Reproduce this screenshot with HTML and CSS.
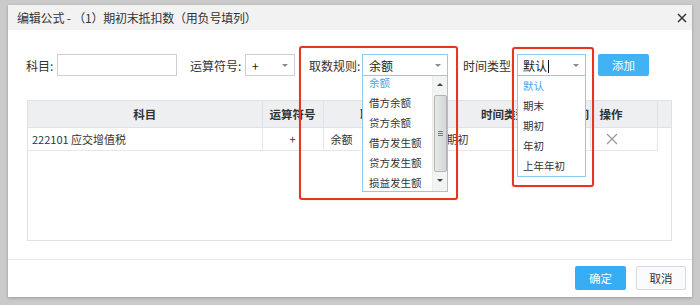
FILE: index.html
```html
<!DOCTYPE html>
<html>
<head>
<meta charset="utf-8">
<link rel="stylesheet" href="styles.css">
</head>
<body>
<div class="dialog">
  <div class="dlg-head">
    <span class="dlg-title">编辑公式 - （1）期初末抵扣数（用负号填列）</span>
    <svg class="dlg-close" width="10" height="10" viewBox="0 0 10 10"><path d="M1 1L9 9M9 1L1 9" stroke="#333" stroke-width="1.5" fill="none"/></svg>
  </div>

  <div class="form-row">
    <div class="field">
      <span class="lbl l-subject">科目:</span>
      <div class="input"></div>
    </div>
    <div class="field f-op">
      <span class="lbl l-op">运算符号:</span>
      <div class="select s-op"><span>+</span><i class="caret"></i></div>
    </div>
    <div class="field f-rule">
      <span class="lbl l-rule">取数规则:</span>
      <div class="select-wrap">
        <div class="select s-rule focus"><span>余额</span><i class="caret"></i></div>
        <div class="dropdown dd-rule">
          <div class="dd-list dd-list-scrolled">
            <div class="dd-item sel">余额</div>
            <div class="dd-item">借方余额</div>
            <div class="dd-item">贷方余额</div>
            <div class="dd-item">借方发生额</div>
            <div class="dd-item">贷方发生额</div>
            <div class="dd-item">损益发生额</div>
          </div>
          <div class="sbar">
            <div class="sbar-arrow"><i class="tri-up"></i></div>
            <div class="sbar-thumb"><i class="grip"></i></div>
            <div class="sbar-arrow"><i class="tri-down"></i></div>
          </div>
        </div>
      </div>
      <span class="mark mark-rule"></span>
    </div>
    <div class="field f-time">
      <span class="lbl l-time">时间类型:</span>
      <div class="select-wrap">
        <div class="select s-time focus"><span>默认<i class="cursor"></i></span><i class="caret"></i></div>
        <div class="dropdown dd-time">
          <div class="dd-list">
            <div class="dd-item sel">默认</div>
            <div class="dd-item">期末</div>
            <div class="dd-item">期初</div>
            <div class="dd-item">年初</div>
            <div class="dd-item">上年年初</div>
          </div>
        </div>
      </div>
      <span class="mark mark-time"></span>
    </div>
    <div class="btn btn-add">添加</div>
  </div>

  <div class="grid">
    <table class="tbl">
      <colgroup>
        <col class="c1"><col class="c2"><col class="c3"><col class="c4"><col class="c5"><col class="c6"><col class="c7">
      </colgroup>
      <thead>
        <tr>
          <th>科目</th>
          <th>运算符号</th>
          <th>取数规则</th>
          <th class="th-time">时间类型</th>
          <th>期间</th>
          <th class="th-left">操作</th>
          <th class="th-fill"></th>
        </tr>
      </thead>
      <tbody>
        <tr>
          <td class="td-subject">222101 应交增值税</td>
          <td class="td-center">+</td>
          <td>余额</td>
          <td class="td-time">期初</td>
          <td></td>
          <td class="td-op"><svg width="12" height="12" viewBox="0 0 12 12"><path d="M1 1L11 11M11 1L1 11" stroke="#9a9a9a" stroke-width="1.3" fill="none"/></svg></td>
          <td class="td-fill"></td>
        </tr>
      </tbody>
    </table>
  </div>

  <div class="dlg-foot">
    <div class="btn btn-ok">确定</div>
    <div class="btn btn-cancel">取消</div>
  </div>
</div>
</body>
</html>
```

FILE: styles.css
```css
* { box-sizing: border-box; }

body {
  margin: 0;
  width: 700px;
  height: 305px;
  overflow: hidden;
  background: #cacaca;
  font-family: "Noto Sans CJK SC", "Liberation Sans", sans-serif;
  color: #333;
}

.dialog {
  margin: 5px 0 0 8px;
  width: 684px;
  height: 292px;
  background: #fff;
  display: flex;
  flex-direction: column;
  box-shadow: 0 1px 3px rgba(0,0,0,0.25);
}

.dlg-head {
  height: 25px;
  flex: none;
  background: #f2f2f2;
  display: flex;
  align-items: center;
  justify-content: space-between;
  padding: 0 5px 0 9px;
}

.dlg-title {
  font-size: 12px;
  color: #333;
  letter-spacing: -0.2px;
}

.dlg-close { display: block; }

/* form row */
.form-row {
  margin-top: 24px;
  height: 22px;
  flex: none;
  display: flex;
  align-items: stretch;
  padding-left: 18px;
  font-size: 12px;
}

.field {
  display: flex;
  align-items: stretch;
  position: relative;
}

.lbl {
  display: flex;
  align-items: center;
  white-space: nowrap;
  color: #333;
}

.l-subject { width: 31px; }
.l-op { width: 55px; }
.l-rule { width: 53px; }
.l-time { width: 54px; }

.f-op { margin-left: 13px; }
.f-rule { margin-left: 14px; }
.f-time { margin-left: 15px; }

.input {
  width: 120px;
  border: 1px solid #cfcfcf;
  background: #fff;
}

.select-wrap {
  position: relative;
  display: flex;
}

.select {
  border: 1px solid #cfcfcf;
  background: #fff;
  display: flex;
  align-items: center;
  justify-content: space-between;
  padding: 0 6px 0 6px;
  font-size: 12px;
  color: #222;
}

.select.focus { border-color: #8ccdef; }

.s-op { width: 50px; }
.s-rule { width: 86px; }
.s-time { width: 69px; padding-left: 5px; }

.caret {
  width: 0;
  height: 0;
  border-left: 3px solid transparent;
  border-right: 3px solid transparent;
  border-top: 3px solid #8a8a8a;
}

.cursor {
  display: inline-block;
  width: 1px;
  height: 13px;
  background: #111;
  vertical-align: -2px;
  margin-left: 1px;
}

/* dropdowns */
.dropdown {
  position: absolute;
  left: 0;
  top: 22px;
  border: 1px solid #8ccdef;
  border-top: none;
  background: #fff;
  display: flex;
  z-index: 5;
  overflow: hidden;
}

.dd-rule { width: 86px; height: 116px; }
.dd-time { width: 69px; height: 101px; }

.dd-list {
  flex: 1;
  overflow: hidden;
}

.dd-list-scrolled .dd-item:first-child { margin-top: -3px; }

.dd-item {
  height: 20px;
  line-height: 20px;
  padding-left: 6px;
  font-size: 10.5px;
  color: #333;
  white-space: nowrap;
}

.dd-time .dd-item { padding-left: 5px; }

.dd-item.sel { color: #4aa5e8; }

.sbar {
  width: 15px;
  flex: none;
  background: #f3f3f3;
  display: flex;
  flex-direction: column;
  align-items: center;
  border-left: 1px solid #ececec;
}

.sbar-arrow {
  height: 17px;
  width: 100%;
  display: flex;
  align-items: center;
  justify-content: center;
}

.tri-up, .tri-down {
  width: 0;
  height: 0;
  border-left: 3px solid transparent;
  border-right: 3px solid transparent;
}
.tri-up { border-bottom: 3px solid #444; }
.tri-down { border-top: 3px solid #444; }

.sbar-thumb {
  margin-top: 2px;
  width: 13px;
  height: 77px;
  border: 1px solid #b5b5b5;
  border-radius: 2px;
  background: linear-gradient(to right, #e8e8e8, #d6d6d6);
  display: flex;
  align-items: center;
  justify-content: center;
}

.grip {
  width: 5px;
  height: 5px;
  border-top: 1px solid #777;
  border-bottom: 1px solid #777;
  position: relative;
}
.grip::after {
  content: "";
  position: absolute;
  left: 0;
  right: 0;
  top: 1px;
  border-top: 1px solid #777;
}

/* red annotation frames */
.mark {
  position: absolute;
  border: 2px solid #e6361d;
  border-radius: 3px;
  pointer-events: none;
  z-index: 6;
  box-shadow: 0 0 1px rgba(230,54,29,0.6);
}

.mark-rule { left: -10px; top: -8px; width: 159px; height: 154px; }
.mark-time { left: 49px; top: -7px; width: 82px; height: 140px; }

/* buttons */
.btn {
  display: flex;
  align-items: center;
  justify-content: center;
  font-size: 11.5px;
  border-radius: 2px;
}

.btn-add {
  margin-left: 12px;
  width: 51px;
  background: #41b2f4;
  color: #fff;
}

/* grid */
.grid {
  margin: 24px 20px 0 19px;
  height: 141px;
  flex: none;
  border: 1px solid #dde2e8;
  background: #fff;
}

.tbl {
  width: 100%;
  border-collapse: collapse;
  table-layout: fixed;
  font-size: 11px;
}

.c1 { width: 234px; }
.c2 { width: 61px; }
.c3 { width: 120px; }
.c4 { width: 122px; }
.c5 { width: 25px; }
.c6 { width: 67px; }
.c7 { width: 14px; }

.tbl th {
  height: 26px;
  background: #eeeff1;
  font-weight: bold;
  font-size: 11.5px;
  color: #333;
  text-align: center;
  border-right: 1px solid #dfe3e8;
  border-bottom: 1px solid #dfe3e8;
  padding: 0;
  white-space: nowrap;
  overflow: hidden;
}

.tbl th.th-left { text-align: left; padding-left: 9px; }
.tbl th.th-fill { border-right: none; }

.tbl td {
  height: 23px;
  border-right: 1px solid #e3e7ec;
  border-bottom: 1px solid #e3e7ec;
  padding: 0 0 0 7px;
  color: #333;
  white-space: nowrap;
  overflow: hidden;
}

.tbl td.td-subject { padding-left: 4px; }
.tbl td.td-center { text-align: center; padding-left: 0; }
.tbl td.td-time { padding-left: 3px; }
.tbl td.td-op { padding-left: 15px; }
.tbl td.td-op svg { display: block; }
.tbl td.td-fill { border: none; }

/* footer */
.dlg-foot {
  margin-top: 18px;
  border-top: 1px solid #e3e7ec;
  padding: 6px 6px 7px 0;
  display: flex;
  justify-content: flex-end;
  gap: 10px;
}

.btn-ok {
  width: 51px;
  height: 24px;
  background: #37adf3;
  color: #fff;
}

.btn-cancel {
  width: 50px;
  height: 24px;
  background: #fafbfc;
  border: 1px solid #d5dbe1;
  color: #333;
}
```
